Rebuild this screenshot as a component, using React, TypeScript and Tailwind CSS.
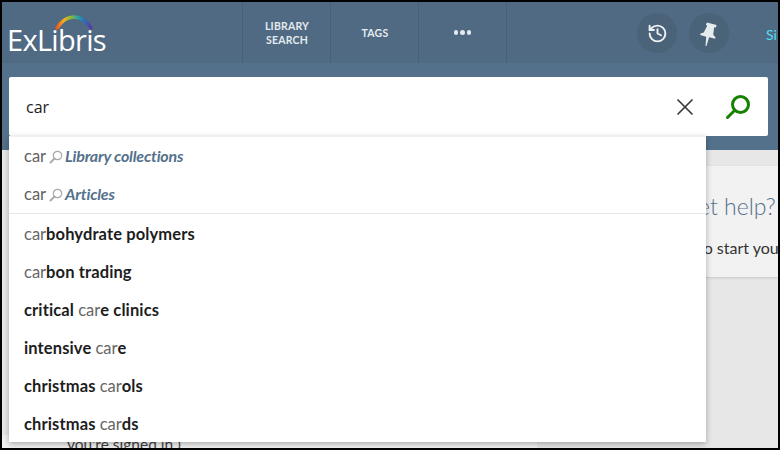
import { X, History } from "lucide-react";

const font = { fontFamily: "Lato, 'Noto Sans', sans-serif" };

function Lens() {
  return (
    <svg width="14" height="14" viewBox="0 0 14 14" fill="none" className="ml-[3px] mr-[2px] shrink-0 translate-y-[1px]">
      <circle cx="8.5" cy="5.5" r="4.2" stroke="#a8a8a8" strokeWidth="1.2" />
      <path d="M5.5 8.5 1.5 12.5" stroke="#a8a8a8" strokeWidth="1.8" strokeLinecap="round" />
    </svg>
  );
}

function Scope({ label }: { label: string }) {
  return (
    <div className="h-[38px] flex items-center pl-[15px] text-[16.5px]">
      <span className="text-[#5f5f5f]">car</span>
      <Lens />
      <span className="italic font-bold text-[16px] text-[#54718b] tracking-[-0.2px]">{label}</span>
    </div>
  );
}

function Row({ parts }: { parts: [string, boolean][] }) {
  return (
    <div className="h-[38px] flex items-center pl-[15px] pt-[2px] text-[16.5px] whitespace-pre">
      {parts.map(([t, b], i) =>
        <span key={i} className={b ? "font-bold text-[#1d1d1d] tracking-[0.12px]" : "text-[#666666]"}>{t}</span>
      )}
    </div>
  );
}

function Logo() {
  return (
    <div className="relative w-[100px] h-[38px] ml-[5px] mt-[13px]">
      <svg width="40" height="17" viewBox="0 0 40 17" className="absolute left-[47px] top-0" fill="none">
        <defs>
          <linearGradient id="rb" x1="0" x2="1" y1="0" y2="0">
            <stop offset="0" stopColor="#ef5a1c" />
            <stop offset="0.2" stopColor="#f7b01c" />
            <stop offset="0.42" stopColor="#86b83c" />
            <stop offset="0.6" stopColor="#2ba7a0" />
            <stop offset="0.8" stopColor="#2a6fc0" />
            <stop offset="1" stopColor="#5a3a9c" />
          </linearGradient>
        </defs>
        <path d="M3 13C8 5 14 2 20 2c6 0 12 3 17 11" stroke="url(#rb)" strokeWidth="3.4" strokeLinecap="round" />
      </svg>
      <span className="absolute left-0 top-[6px] text-white text-[29px] leading-[38px] tracking-[-0.7px]" style={{ fontFamily: "'Open Sans', sans-serif" }}>ExLibris</span>
    </div>
  );
}

export default function App() {
  return (
    <div className="relative w-[780px] h-[450px] overflow-hidden bg-black pt-[2px] pl-[2px] pr-[2px] pb-[2px]" style={font}>
      <div className="relative h-full flex flex-col bg-[#e7e7e7] overflow-hidden">
        <header className="h-[61px] shrink-0 bg-[#4f6a82] flex">
          <div className="w-[240px] shrink-0"><Logo /></div>
          <nav className="flex h-[61px] border-l border-[#456077] text-[#e4eaef] text-[10.5px] font-bold leading-[14px] tracking-[0.2px] text-center">
            <div className="w-[88px] border-r border-[#456077] flex items-center justify-center pl-[1px]">LIBRARY<br />SEARCH</div>
            <div className="w-[88px] border-r border-[#456077] flex items-center justify-center pl-[1px]">TAGS</div>
            <div className="w-[88px] border-r border-[#456077] flex items-center justify-center gap-[2px]">
              <i className="w-[4.5px] h-[4.5px] rounded-full bg-[#e4eaef]" />
              <i className="w-[4.5px] h-[4.5px] rounded-full bg-[#e4eaef]" />
              <i className="w-[4.5px] h-[4.5px] rounded-full bg-[#e4eaef]" />
            </div>
          </nav>
          <div className="ml-[130px] flex items-center gap-[12px] pt-[1px]">
            <div className="w-[40px] h-[40px] rounded-full bg-[#4a6378] flex items-center justify-center text-[#eef1f3]"><History size={21} strokeWidth={2.2} /></div>
            <div className="w-[40px] h-[40px] rounded-full bg-[#4a6378] flex items-center justify-center">
              <svg width="24" height="28" viewBox="0 0 24 28" fill="#e8ebee">
                <path d="M10 3.5 19.5 6 19 8.5l-1.8-.3-1 7.5 2.3 2.5-.4 1.6-6-1.5L9.5 27l-1 0 .7-9.3-6-1.6.3-1.7 3.3-1 3.4-6.6-1.3-1z" />
              </svg>
            </div>
          </div>
          <div className="ml-[37px] flex items-center text-[14px] text-[#4fdcf5] pt-[3px] w-[12px] overflow-hidden">Si</div>
        </header>

        <div className="h-[87px] shrink-0 bg-[#54718b] pt-[14px] pl-[7px]">
          <div className="w-[759px] h-[59px] bg-white rounded-[2px] flex items-center pl-[17px]">
            <span className="text-[16px] text-[#1d1d1d] flex-1" style={{ fontFamily: "'Open Sans', sans-serif" }}>car</span>
            <X size={28} strokeWidth={1.5} className="text-[#3c3c3c] mr-[26px]" />
            <svg width="26" height="26" viewBox="0 0 26 26" fill="none" className="mr-[17px]">
              <circle cx="15.5" cy="10.5" r="8" stroke="#168000" strokeWidth="3" />
              <path d="M9.5 16.5 2.5 23.5" stroke="#168000" strokeWidth="3" strokeLinecap="round" />
            </svg>
          </div>
        </div>

        <main className="flex-1 flex flex-col relative">
          <div className="flex justify-end pt-[16px]">
            <section className="w-[230px] h-[111px] bg-[#f2f2f2] shadow-sm pl-[150px] overflow-hidden whitespace-nowrap">
              <div className="-ml-[140px] pl-[140px] text-[23px] font-light text-[#54718b] pt-[23px] leading-[34px]">et help?</div>
              <div className="text-[16px] text-[#333333] pt-[13px]">to start you</div>
            </section>
          </div>
          <div className="mt-auto h-[13px] w-[535px] bg-[#f2f2f2] pl-[65px] text-[15.5px] text-[#444444] leading-[18px] whitespace-nowrap overflow-hidden">you're signed in.)</div>
        </main>

        <div className="absolute left-[7px] top-[134px] w-[697px] h-[306px] bg-white shadow-[0_2px_6px_rgba(0,0,0,0.3)] border-t border-[#f0f0f0]">
          <div className="h-[77px] border-b border-[#e6e6e6]">
            <Scope label="Library collections" />
            <Scope label="Articles" />
          </div>
          <Row parts={[["car", false], ["bohydrate polymers", true]]} />
          <Row parts={[["car", false], ["bon trading", true]]} />
          <Row parts={[["critical ", true], ["car", false], ["e clinics", true]]} />
          <Row parts={[["intensive ", true], ["car", false], ["e", true]]} />
          <Row parts={[["christmas ", true], ["car", false], ["ols", true]]} />
          <Row parts={[["christmas ", true], ["car", false], ["ds", true]]} />
        </div>
      </div>
    </div>
  );
}
